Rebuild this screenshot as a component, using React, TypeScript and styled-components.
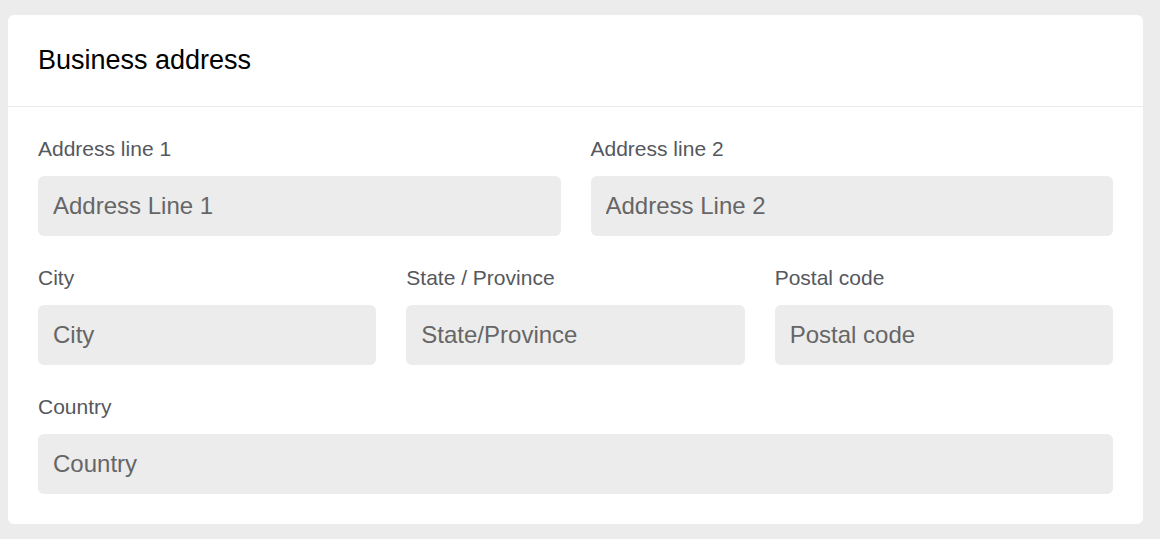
import React from "react";
import styled, { createGlobalStyle } from "styled-components";

const Global = createGlobalStyle`
  html, body { margin: 0; padding: 0; background: #ececec; }
  body { padding: 15px 17px 16px 8px; font-family: "Liberation Sans", Arial, sans-serif; }
  * { box-sizing: border-box; }
`;

const Card = styled.section`
  background: #fff;
  border-radius: 6px;
  overflow: hidden;
`;

const Header = styled.header`
  padding: 30px 30px;
  border-bottom: 1px solid #e9e9e9;
`;

const Title = styled.h2`
  margin: 0;
  font-family: "Liberation Sans", Arial, sans-serif;
  font-weight: 400;
  font-size: 27px;
  line-height: 31px;
  color: #000;
`;

const Body = styled.div`
  padding: 30px 30px 30px;
  display: flex;
  flex-direction: column;
  gap: 30px;
`;

const Row = styled.div<{ $cols: number }>`
  display: grid;
  grid-template-columns: repeat(${(p) => p.$cols}, 1fr);
  column-gap: 30px;
`;

const Field = styled.label`
  display: flex;
  flex-direction: column;
  gap: 16px;
`;

const Label = styled.span`
  font-size: 21px;
  line-height: 23px;
  color: #55585d;
`;

const Input = styled.input`
  height: 60px;
  border: none;
  border-radius: 6px;
  background: #ececec;
  padding: 0 15px;
  font-family: "Liberation Sans", Arial, sans-serif;
  font-size: 24px;
  color: #333;
  outline: none;
  width: 100%;
  &::placeholder { color: #666; }
`;

const F = ({ label, ph }: { label: string; ph: string }) => (
  <Field>
    <Label>{label}</Label>
    <Input placeholder={ph} />
  </Field>
);

export default function App() {
  return (
    <>
      <Global />
      <Card>
        <Header>
          <Title>Business address</Title>
        </Header>
        <Body>
          <Row $cols={2}>
            <F label="Address line 1" ph="Address Line 1" />
            <F label="Address line 2" ph="Address Line 2" />
          </Row>
          <Row $cols={3}>
            <F label="City" ph="City" />
            <F label="State / Province" ph="State/Province" />
            <F label="Postal code" ph="Postal code" />
          </Row>
          <Row $cols={1}>
            <F label="Country" ph="Country" />
          </Row>
        </Body>
      </Card>
    </>
  );
}
